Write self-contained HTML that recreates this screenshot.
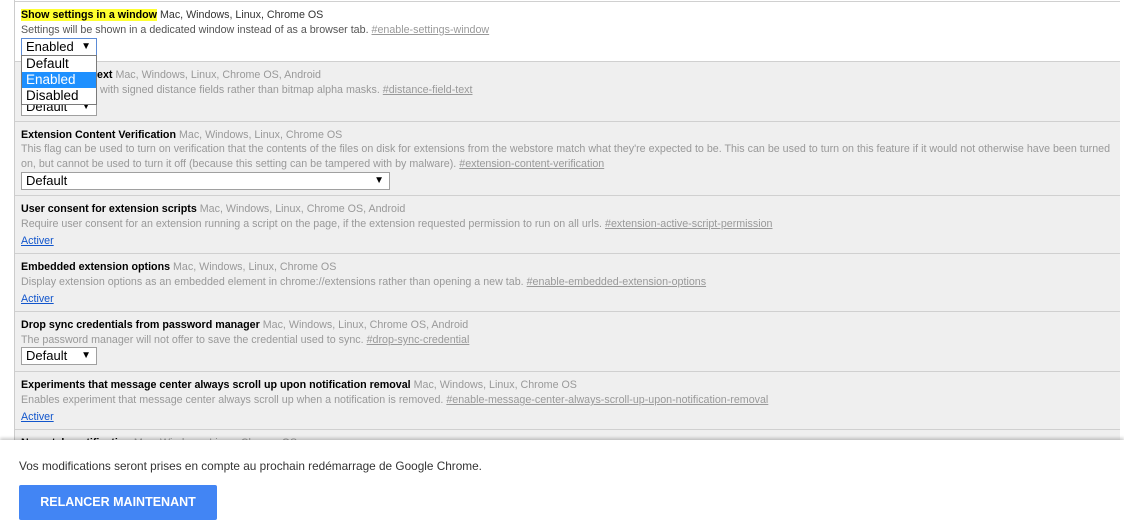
<!DOCTYPE html>
<html><head><meta charset="utf-8"><style>
*{margin:0;padding:0;box-sizing:border-box}
body{width:1124px;height:528px;overflow:hidden;background:#fff;font-family:"Liberation Sans",sans-serif;font-size:10.7px;color:#999;position:relative}
#wrap{position:absolute;left:14px;top:0;width:1106px;height:528px;border-left:1px solid #ccc}
.row{position:absolute;left:0;width:1105px;border-top:1px solid #d0d0d0;background:#efefef;padding-left:6px}
.row.w{background:#fff}
.l{position:absolute;left:6px;white-space:nowrap;line-height:14px}
b{color:#000;font-weight:bold}
.hl{background:#ffff30}
u{color:#999}
a{color:#15c;text-decoration:underline}
.sel{position:absolute;left:6px;height:18px;border:1px solid #a0a0a0;background:#fff;color:#000;font-size:13px;line-height:16px;padding-left:4px}
.sel span{position:absolute;right:5px;top:0;font-size:10px}
#pop{position:absolute;left:21px;top:55px;width:76px;height:50px;border:1px solid #7a7a7a;background:#fff;font-size:13.5px;color:#000}
#pop div{height:16px;line-height:16px;padding-left:4px}
#foot{position:absolute;left:0;top:440px;width:1124px;height:88px;background:#fff;box-shadow:0 -2px 3px rgba(0,0,0,.2)}
#btn{position:absolute;left:19px;top:485px;width:198px;height:35px;background:#4285f4;border-radius:2px;color:#fff;font-weight:bold;font-size:12.5px;text-align:center;line-height:35px}
</style></head><body>
<div id="wrap">
<div class="row w" style="top:1px;height:60px">
<div class="l" style="top:6px"><b class="hl">Show settings in a window</b> <span style="color:#333">Mac, Windows, Linux, Chrome OS</span></div>
<div class="l" style="top:21px;color:#555">Settings will be shown in a dedicated window instead of as a browser tab. <u>#enable-settings-window</u></div>
<div class="sel" style="top:36px;width:76px;border-color:#5b8bd6">Enabled<span>▼</span></div>
</div>
<div class="row" style="top:61px;height:60px">
<div class="l" style="top:6px"><b>Distance field text</b> Mac, Windows, Linux, Chrome OS, Android</div>
<div class="l" style="top:21px">Text is rendered with signed distance fields rather than bitmap alpha masks. <u>#distance-field-text</u></div>
<div class="sel" style="top:36px;width:76px">Default<span>▼</span></div>
</div>
<div class="row" style="top:121px;height:74px">
<div class="l" style="top:6px"><b>Extension Content Verification</b> Mac, Windows, Linux, Chrome OS</div>
<div class="l" style="top:20px">This flag can be used to turn on verification that the contents of the files on disk for extensions from the webstore match what they're expected to be. This can be used to turn on this feature if it would not otherwise have been turned</div>
<div class="l" style="top:35px">on, but cannot be used to turn it off (because this setting can be tampered with by malware). <u>#extension-content-verification</u></div>
<div class="sel" style="top:50px;width:369px">Default<span>▼</span></div>
</div>
<div class="row" style="top:195px;height:58px">
<div class="l" style="top:6px"><b>User consent for extension scripts</b> Mac, Windows, Linux, Chrome OS, Android</div>
<div class="l" style="top:21px">Require user consent for an extension running a script on the page, if the extension requested permission to run on all urls. <u>#extension-active-script-permission</u></div>
<div class="l" style="top:38px"><a>Activer</a></div>
</div>
<div class="row" style="top:253px;height:58px">
<div class="l" style="top:6px"><b>Embedded extension options</b> Mac, Windows, Linux, Chrome OS</div>
<div class="l" style="top:21px">Display extension options as an embedded element in chrome://extensions rather than opening a new tab. <u>#enable-embedded-extension-options</u></div>
<div class="l" style="top:38px"><a>Activer</a></div>
</div>
<div class="row" style="top:311px;height:60px">
<div class="l" style="top:6px"><b>Drop sync credentials from password manager</b> Mac, Windows, Linux, Chrome OS, Android</div>
<div class="l" style="top:21px">The password manager will not offer to save the credential used to sync. <u>#drop-sync-credential</u></div>
<div class="sel" style="top:35px;width:76px">Default<span>▼</span></div>
</div>
<div class="row" style="top:371px;height:58px">
<div class="l" style="top:6px"><b>Experiments that message center always scroll up upon notification removal</b> Mac, Windows, Linux, Chrome OS</div>
<div class="l" style="top:21px">Enables experiment that message center always scroll up when a notification is removed. <u>#enable-message-center-always-scroll-up-upon-notification-removal</u></div>
<div class="l" style="top:38px"><a>Activer</a></div>
</div>
<div class="row" style="top:429px;height:40px">
<div class="l" style="top:6px"><b>New style notification</b> Mac, Windows, Linux, Chrome OS</div>
</div>
</div>
<div id="pop"><div>Default</div><div style="background:#1e90ff;color:#fff">Enabled</div><div>Disabled</div></div>
<div id="foot"><div style="position:absolute;left:19px;top:19px;font-size:11.8px;color:#333">Vos modifications seront prises en compte au prochain redémarrage de Google Chrome.</div></div>
<div id="btn">RELANCER MAINTENANT</div>
</body></html>
